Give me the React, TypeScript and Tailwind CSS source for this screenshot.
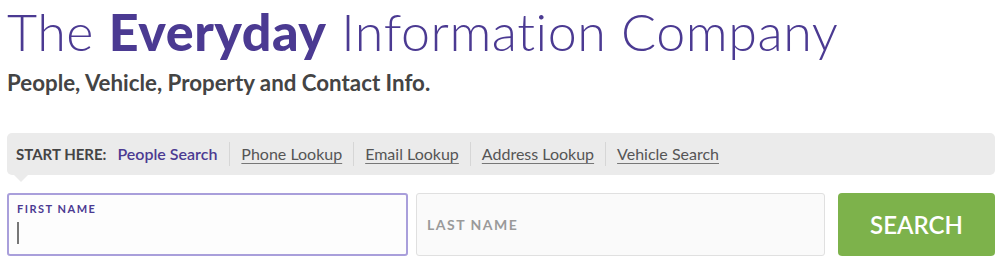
import { useState } from "react";

const tabs = ["Phone Lookup", "Email Lookup", "Address Lookup", "Vehicle Search"];

export default function App() {
  const [first, setFirst] = useState("");
  const [last, setLast] = useState("");

  return (
    <div className="min-h-screen bg-white pl-[7px] pr-[6px] font-['Lato','Liberation_Sans',sans-serif]">
      {/* heading */}
      <h1 className="text-[52px] leading-[1.2] tracking-[0.55px] text-[#4b3a92] font-light whitespace-nowrap">
        The <span className="font-black">Everyday</span> Information Company
      </h1>
      <p className="mt-[8px] text-[22.3px] leading-[1.2] font-bold text-[#444]">
        People, Vehicle, Property and Contact Info.
      </p>

      {/* search type tabs */}
      <div className="relative mt-[36px] flex h-[42px] items-center rounded-[5px] bg-[#ebebeb] pl-[9px] text-[16px]">
        <span className="mr-[11px] text-[15px] font-bold uppercase text-[#444]">Start here:</span>
        <span className="pr-[12px] font-semibold text-[#4b3a92]">People Search</span>
        {tabs.map((t) => (
          <div key={t} className="flex items-center">
            <span className="h-[24px] w-px bg-[#d6d6d6]" />
            <a href="#" className="px-[11px] text-[#555] underline decoration-[#777] underline-offset-[3px]">
              {t}
            </a>
          </div>
        ))}
        <span className="absolute left-[7px] top-full h-0 w-0 border-l-[7px] border-r-[7px] border-t-[7px] border-l-transparent border-r-transparent border-t-[#ebebeb]" />
      </div>

      {/* search form */}
      <form className="mt-[18px] flex h-[63px] items-stretch" onSubmit={(e) => e.preventDefault()}>
        <label className="flex w-[401px] flex-col rounded-[3px] border-2 border-[#a99fdb] bg-[#fdfdfd] px-[8px] pt-[8px]">
          <span className="text-[11px] font-bold uppercase leading-none tracking-[1.5px] text-[#4b3a92]">First name</span>
          <div className="mt-[8px] flex h-[22px] items-stretch">
            <span className="w-[2px] bg-[#777]" />
            <input
              value={first}
              onChange={(e) => setFirst(e.target.value)}
              className="w-full bg-transparent text-[16px] outline-none"
            />
          </div>
        </label>
        <div className="ml-[8px] flex w-[409px] items-center rounded-[3px] border border-[#e0e0e0] bg-[#fafafa] px-[10px]">
          <input
            value={last}
            onChange={(e) => setLast(e.target.value)}
            placeholder="LAST NAME"
            className="w-full bg-transparent text-[14px] font-bold tracking-[1.5px] text-[#444] outline-none placeholder:text-[#9a9a9a]"
          />
        </div>
        <button
          type="submit"
          className="ml-[13px] w-[157px] rounded-[4px] bg-[#7db24b] text-[24px] font-semibold text-white"
        >
          SEARCH
        </button>
      </form>
    </div>
  );
}
